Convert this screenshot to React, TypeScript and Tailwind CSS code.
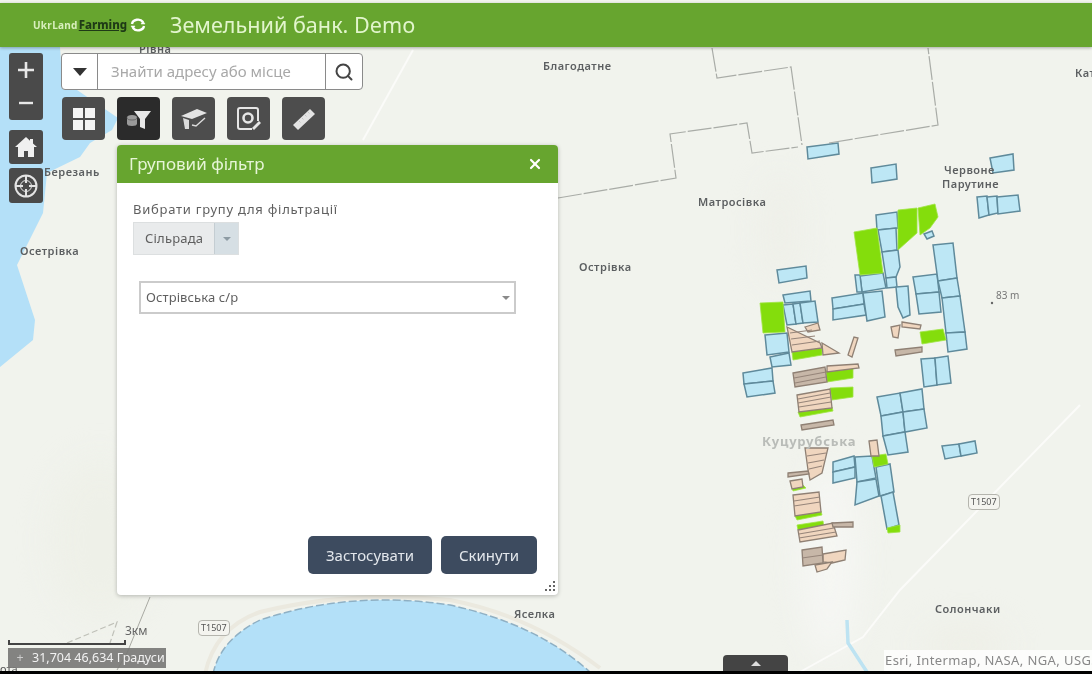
import { Search, X } from "lucide-react"

const blue = [
  "807,147 838,143 839,154 808,159",
  "871,168 896,164 897,179 872,183",
  "990,158 1013,154 1014,170 993,173",
  "977,197 987,196 989,215 979,218",
  "987,197 997,196 998,213 989,215",
  "997,197 1018,195 1020,211 998,214",
  "876,215 897,212 898,228 877,230",
  "878,230 896,228 897,250 882,252",
  "882,252 898,250 900,267 896,277 886,278",
  "777,270 806,266 807,278 779,283",
  "783,295 810,291 811,301 785,303",
  "783,305 793,304 796,324 787,325",
  "793,304 800,303 803,323 796,324",
  "800,303 815,301 818,322 803,323",
  "765,335 787,333 789,352 767,355",
  "770,357 789,353 791,365 772,367",
  "832,298 863,293 864,304 833,309",
  "833,309 864,304 866,315 833,320",
  "863,293 882,291 885,317 867,321",
  "860,276 883,273 886,288 862,292",
  "855,275 860,275 862,292 857,292",
  "886,278 896,277 897,287 887,288",
  "896,287 908,286 910,315 903,318 898,307",
  "913,277 937,274 939,292 916,294",
  "916,294 939,292 941,312 919,314",
  "933,245 953,243 957,278 938,281",
  "938,281 957,278 960,296 942,298",
  "942,298 960,296 965,332 946,333",
  "946,333 965,332 967,349 948,352",
  "921,359 935,358 937,385 924,387",
  "935,358 948,356 951,383 937,385",
  "743,373 772,368 773,381 744,384",
  "744,384 773,381 775,393 747,397",
  "877,397 900,393 903,412 881,416",
  "900,393 922,389 924,409 903,412",
  "881,416 903,412 905,432 883,436",
  "903,412 924,409 927,428 905,432",
  "883,436 905,432 908,452 888,455",
  "942,446 959,444 961,456 945,459",
  "959,444 975,441 977,453 961,456",
  "833,462 854,456 855,467 833,472",
  "833,472 855,467 855,478 833,483",
  "855,457 872,456 876,478 857,482",
  "857,482 876,479 879,496 855,505",
  "876,467 890,464 894,492 880,496",
  "881,496 893,492 899,525 887,529",
  "924,234 932,231 934,236 927,239",
]

const green = [
  "854,232 877,228 883,273 860,275",
  "898,210 917,208 917,233 898,250",
  "918,208 935,204 938,217 930,228 920,235",
  "760,303 783,302 785,332 763,333",
  "920,332 943,329 946,340 922,344",
  "792,352 822,348 822,355 793,360",
  "872,456 886,454 888,464 874,467",
  "887,528 900,525 900,532 888,533",
  "826,371 853,368 853,378 827,382",
  "830,388 853,387 853,397 832,400",
  "797,525 823,521 824,527 798,530",
  "798,412 832,407 833,411 800,417",
  "795,516 821,511 822,515 797,520",
  "792,487 803,485 806,488 793,491",
]

const tan = [
  "787,327 820,343 822,348 792,352",
  "822,343 839,353 823,355",
  "805,327 818,323 820,330 808,332",
  "848,355 854,337 858,338 852,357",
  "891,327 900,325 898,338 893,337",
  "902,322 921,325 920,329 902,327",
  "827,366 858,364 859,368 827,372",
  "797,395 830,389 832,408 799,412",
  "805,448 828,448 822,473 810,480 808,470",
  "790,481 802,479 803,487 792,489",
  "793,495 819,492 821,512 795,516",
  "798,530 833,523 837,536 800,542",
  "823,554 846,550 845,560 832,563 823,562",
  "815,565 832,562 827,569 817,572",
  "869,441 877,440 879,456 871,456",
]

// parcels that read grey-brown in the picture
const dark = [
  "895,350 922,347 922,352 896,356",
  "793,373 825,367 827,382 795,387",
  "801,425 833,420 834,425 802,430",
  "788,473 808,471 809,474 788,477",
  "832,523 853,522 853,527 833,527",
  "802,550 822,547 823,563 803,566",
]

// thin strips inside the tan parcels
const strips = [
  "M790 333L812 330M791 339L815 336M792 345L820 341",
  "M794 378L826 372M795 383L826 377",
  "M798 399L830 393M798 403L831 397M799 407L831 402",
  "M807 456L826 453M808 463L824 460M809 469L822 466",
  "M794 501L820 497M794 506L820 502",
  "M799 534L834 528M799 538L836 532",
  "M802 558L823 555",
]

const labels = [
  { text: "Рівна", cls: "left-[139px] top-[42px]" },
  { text: "Благодатне", cls: "left-[543px] top-[59px]" },
  { text: "Кат", cls: "left-[1075px] top-[66px]" },
  { text: "Матросівка", cls: "left-[698px] top-[195px]" },
  { text: "Острівка", cls: "left-[579px] top-[260px]" },
  { text: "Червоне", cls: "left-[944px] top-[163px]" },
  { text: "Парутине", cls: "left-[942px] top-[177px]" },
  { text: "Березань", cls: "left-[44px] top-[165px]" },
  { text: "Осетрівка", cls: "left-[20px] top-[244px]" },
  { text: "Яселка", cls: "left-[514px] top-[607px]" },
  { text: "Солончаки", cls: "left-[935px] top-[602px]" },
]

function MapLayer() {
  return (
    <div className="absolute inset-0 bg-[#f1f3ed]">
      <svg width="1092" height="674" className="absolute inset-0 blur-lg">
        <ellipse cx="100" cy="540" rx="50" ry="80" fill="#eef0e8" />
        <ellipse cx="780" cy="230" rx="18" ry="55" fill="#eeefe8" />
        <ellipse cx="830" cy="560" rx="30" ry="100" fill="#f5f6f3" />
        <ellipse cx="965" cy="645" rx="45" ry="22" fill="#eeefe7" />
      </svg>
      <svg width="1092" height="674" className="absolute inset-0">
        <path d="M0 47H60L62 80L80 92L118 118L112 130L90 143L80 157L47 173L43 213L17 265L35 320L33 340L0 367Z" fill="#b4e0f8" />
        <path d="M205 674Q215 628 260 612Q350 590 450 600Q530 615 600 668" fill="none" stroke="#ebe9df" strokeWidth="4" />
        <path d="M213 674Q220 640 260 620Q350 590 450 605Q540 625 592 674Z" fill="#b3e0f8" />
        <path d="M213 674Q220 640 260 620Q350 590 450 605Q540 625 592 674" fill="none" stroke="#8fb0c4" strokeWidth="1.5" strokeDasharray="8 3" />
        <path d="M1080 405L900 590L863 637L800 672" fill="none" stroke="#fbfbf9" strokeWidth="2" />
        <path d="M413 50L363 140" fill="none" stroke="#fbfbf9" strokeWidth="2" />
        <path d="M847 620L848 643L867 672" fill="none" stroke="#bde3f2" strokeWidth="3.5" />
        <path d="M150 597L127 653L117 670" fill="none" stroke="#a9aaa3" strokeWidth="1" />
        <path d="M67 643L117 622L110 643" fill="none" stroke="#bfc0b8" strokeWidth="1.2" strokeDasharray="6 3" />
        <path d="M712 48L717 78L791 67L802 145M829 143L938 125L928 48M558 198L676 178L670 134L747 123L752 153L798 147" fill="none" stroke="#a9aca7" strokeWidth="1.2" strokeDasharray="24 2" />
        <g stroke="#5f8a9b" strokeWidth="1.5" fill="#bde7f5">
          {blue.map((p) => (
            <polygon key={p} points={p} />
          ))}
        </g>
        <g fill="#84dd0c" stroke="#a0e545" strokeWidth="0.8">
          {green.map((p) => (
            <polygon key={p} points={p} />
          ))}
        </g>
        <g stroke="#8f8074" strokeWidth="1.3" fill="#f0d6bf">
          {tan.map((p) => (
            <polygon key={p} points={p} />
          ))}
        </g>
        <g stroke="#8f8074" strokeWidth="1.3" fill="#c7b7a8">
          {dark.map((p) => (
            <polygon key={p} points={p} />
          ))}
        </g>
        {strips.map((d) => (
          <path key={d} d={d} fill="none" stroke="#96857a" strokeWidth="1.2" />
        ))}
        <circle cx="992" cy="303" r="1.2" fill="#666" />
      </svg>
      {labels.map((l) => (
        <span key={l.text} className={`absolute text-[11px] leading-[14px] tracking-[0.5px] font-semibold text-[#5c5f61] whitespace-nowrap ${l.cls}`}>
          {l.text}
        </span>
      ))}
      <span className="absolute left-[996px] top-[289px] text-[10px] leading-[12px] text-[#777]">83 m</span>
      <span className="absolute left-[762px] top-[433px] text-[13px] leading-[16px] font-bold tracking-[0.8px] text-[#b9bcb8]">Куцурубська</span>
      <span className="absolute left-[968px] top-[494px] border border-[#b5b5ae] bg-[#f4f4ef] rounded-sm px-[2px] text-[9px] leading-[14px] text-[#555]">T1507</span>
      <span className="absolute left-[198px] top-[620px] border border-[#b5b5ae] bg-[#f4f4ef] rounded-sm px-[2px] text-[9px] leading-[14px] text-[#555]">T1507</span>
      <span className="absolute left-[125px] top-[624px] text-[12px] leading-[14px] text-[#666]">3км</span>
      <span className="absolute left-0 top-[662px] text-[11px] leading-[14px] text-[#555]">ота</span>
    </div>
  )
}

function Logo() {
  return (
    <div className="flex items-center ml-[33px] w-[137px]">
      <span className="text-[10px] font-bold tracking-[0.3px] text-[#d8efbd] leading-none">UkrLand</span>
      <span className="ml-[1px] text-[11.5px] font-extrabold text-[#1e3a16] leading-none underline">Farming</span>
      <svg width="16" height="16" viewBox="0 0 16 16" className="ml-[3px]" fill="none" stroke="#fff" strokeWidth="2.4">
        <path d="M2 7A6 5 0 0 1 13 5" />
        <path d="M14 9A6 5 0 0 1 3 11" />
        <path d="M11 7h4L13 4z" fill="#fff" strokeWidth="0.5" />
        <path d="M5 9H1l2 3z" fill="#fff" strokeWidth="0.5" />
      </svg>
    </div>
  )
}

function SideButtons() {
  return (
    <div className="absolute left-[9px] top-[53px] flex flex-col w-[34px] gap-[4px]">
      <div className="h-[67px] mb-[6px] rounded-[3px] bg-[#4a4a4a] flex flex-col items-center justify-around text-[#e8e8e8]">
        <svg width="18" height="18" viewBox="0 0 18 18" stroke="currentColor" strokeWidth="2.6"><path d="M9 1v16M1 9h16" /></svg>
        <svg width="18" height="18" viewBox="0 0 18 18" stroke="currentColor" strokeWidth="2.4"><path d="M2 9h14" /></svg>
      </div>
      <div className="h-[34px] rounded-[3px] bg-[#4a4a4a] flex items-center justify-center">
        <svg width="24" height="22" viewBox="0 0 24 22" fill="#f0f0f0">
          <path d="M12 1L1 11h3v10h6v-6h4v6h6V11h3l-4-3.6V3h-3v1.7z" />
        </svg>
      </div>
      <div className="h-[35px] rounded-[3px] bg-[#4a4a4a] flex items-center justify-center">
        <svg width="26" height="26" viewBox="0 0 26 26" fill="none" stroke="#e4e4e4">
          <circle cx="13" cy="13" r="10.5" strokeWidth="2" />
          <circle cx="13" cy="13" r="5.5" strokeWidth="1" />
          <path d="M13 3v7M13 16v7M3 13h7M16 13h7" strokeWidth="2" />
        </svg>
      </div>
    </div>
  )
}

function SearchBar() {
  return (
    <div className="flex h-[37px] w-[302px] bg-white border border-[#8a8a8a] rounded-[4px]">
      <div className="w-[36px] border-r border-[#8a8a8a] flex items-center justify-center">
        <svg width="14" height="8" viewBox="0 0 14 8" fill="#333"><path d="M0 0h14L7 8z" /></svg>
      </div>
      <div className="flex-1 flex items-center pl-[13px] text-[15px] text-[#a8a8a8]">Знайти адресу або місце</div>
      <div className="w-[37px] border-l border-[#8a8a8a] flex items-center justify-center text-[#444]">
        <Search size={20} strokeWidth={2.4} />
      </div>
    </div>
  )
}

function ToolButton({ active, children }: { active?: boolean; children: React.ReactNode }) {
  return (
    <div className={`w-[43px] h-[43px] rounded-[4px] flex items-center justify-center ${active ? "bg-[#2b2b2b]" : "bg-[#4d4d4d]"}`}>
      {children}
    </div>
  )
}

function Toolbar() {
  return (
    <div className="flex gap-[12px] ml-[1px]">
      <ToolButton>
        <svg width="24" height="24" viewBox="0 0 24 24" fill="#f4f4f4">
          <rect x="1" y="1" width="10" height="10" />
          <rect x="13" y="1" width="10" height="10" />
          <rect x="1" y="13" width="10" height="10" />
          <rect x="13" y="13" width="10" height="10" />
        </svg>
      </ToolButton>
      <ToolButton active>
        <svg width="26" height="22" viewBox="0 0 26 22">
          <path d="M8 3h17l-6 8v10l-5-2v-8z" fill="#e8e8e8" />
          <path d="M1 9.5a5 2.5 0 0 1 10 0v6a5 2.5 0 0 1-10 0z" fill="#9a9a9a" />
          <path d="M1 9.5a5 2.5 0 0 0 10 0" fill="none" stroke="#5c5c5c" strokeWidth="0.8" />
        </svg>
      </ToolButton>
      <ToolButton>
        <svg width="28" height="24" viewBox="0 0 28 24" fill="none">
          <path d="M1 9L17 2l10 4-15 6z" fill="#e4e4e4" />
          <path d="M3 11l6 2v9H5z" fill="#dcdcdc" />
          <path d="M12 18l4 1 9-8" stroke="#dcdcdc" strokeWidth="1.4" />
        </svg>
      </ToolButton>
      <ToolButton>
        <svg width="26" height="26" viewBox="0 0 26 26" fill="none" stroke="#e6e6e6">
          <path d="M16 23H4a2 2 0 0 1-2-2V4a2 2 0 0 1 2-2h16a2 2 0 0 1 2 2v11" strokeWidth="2" />
          <circle cx="12" cy="12" r="4.5" strokeWidth="2.6" />
          <path d="M17 23l7-7" strokeWidth="2.8" />
        </svg>
      </ToolButton>
      <ToolButton>
        <svg width="26" height="26" viewBox="0 0 26 26">
          <path d="M2 19L19 3l5 5L7 24z" fill="#e4e4e4" />
          <path d="M8 15l1.500 1.500M11 12l1.500 1.500M14 9l1.500 1.500M17 6l1.500 1.500" stroke="#bbb" strokeWidth="0.8" />
        </svg>
      </ToolButton>
    </div>
  )
}

function FilterPanel() {
  return (
    <div className="absolute left-[117px] top-[145px] w-[441px] h-[450px] bg-white rounded-[4px] shadow-[0_1px_4px_rgba(0,0,0,0.25)] flex flex-col">
      <div className="h-[38px] shrink-0 bg-[#67a52f] rounded-t-[4px] flex items-center justify-between pl-[12px] pr-[15px] text-[17px] text-[#e6f5d6]">
        <span>Груповий фільтр</span>
        <X size={16} strokeWidth={3.2} className="text-white" />
      </div>
      <div className="flex-1 flex flex-col pl-[16px] pr-[21px] pt-[17px] pb-[21px] text-[#5f5f5f]">
        <div className="text-[13px] leading-[18px] tracking-[0.75px]">Вибрати групу для фільтрації</div>
        <div className="mt-[4px] w-[106px] h-[33px] flex bg-[#e9ebec] border border-[#dcdfe0] text-[13px] tracking-[0.2px]">
          <div className="flex-1 flex items-center pl-[11px]">Сільрада</div>
          <div className="w-[24px] bg-[#d6dfe4] border-l border-[#c4cdd2] flex items-center justify-center">
            <svg width="8" height="4" viewBox="0 0 8 4" fill="#8d9ba3"><path d="M0 0h8L4 4z" /></svg>
          </div>
        </div>
        <div className="mt-[26px] ml-[6px] h-[33px] w-[377px] flex items-center justify-between border-2 border-[#cbcbcb] pl-[5px] pr-[4px] text-[13px] tracking-[0.1px]">
          <span>Острівська с/р</span>
          <svg width="8" height="4" viewBox="0 0 8 4" fill="#8a8a8a"><path d="M0 0h8L4 4z" /></svg>
        </div>
        <div className="mt-auto flex justify-end gap-[9px]">
          <button className="w-[124px] h-[38px] rounded-[5px] bg-[#3d4b5f] text-[15px] text-[#e3e7ec]">Застосувати</button>
          <button className="w-[96px] h-[38px] rounded-[5px] bg-[#3d4b5f] text-[15px] text-[#e3e7ec]">Скинути</button>
        </div>
      </div>
      <svg width="12" height="12" viewBox="0 0 12 12" fill="#666" className="absolute right-[2px] bottom-[3px]">
        <rect x="9" y="1" width="2" height="2" />
        <rect x="5" y="5" width="2" height="2" />
        <rect x="9" y="5" width="2" height="2" />
        <rect x="1" y="9" width="2" height="2" />
        <rect x="5" y="9" width="2" height="2" />
        <rect x="9" y="9" width="2" height="2" />
      </svg>
    </div>
  )
}

export default function App() {
  return (
    <div className="relative w-[1092px] h-[674px] overflow-hidden flex flex-col bg-white blur-[0.5px] font-['Noto_Sans','Open_Sans',sans-serif]">
      <MapLayer />
      <SideButtons />
      <div className="absolute left-[61px] top-[53px] flex flex-col gap-[7px]">
        <SearchBar />
        <Toolbar />
      </div>
      <FilterPanel />

      {/* scale bar + coords */}
      <div className="absolute left-[8px] top-[640px] w-[118px] h-[5px] border-x-2 border-b-2 border-[#444]" />
      <div className="absolute left-[8px] top-[648px] w-[158px] h-[20px] bg-[#777774]/90 flex items-center text-[12.5px] text-[#f2f2f2]">
        <span className="w-[24px] text-center text-[#ccc]">+</span>
        <span className="whitespace-nowrap">31,704 46,634 Градуси</span>
      </div>
      <div className="absolute left-[884px] top-[650px] w-[208px] h-[21px] bg-white/80 flex items-center pl-[1px] text-[13px] tracking-[0.4px] text-[#888] whitespace-nowrap overflow-hidden">
        Esri, Intermap, NASA, NGA, USGS
      </div>
      <div className="absolute left-[723px] top-[655px] w-[65px] h-[16px] bg-[#444] rounded-t-[4px] flex items-center justify-center">
        <svg width="10" height="5" viewBox="0 0 10 5" fill="#ddd"><path d="M5 0l5 5H0z" /></svg>
      </div>

      <div className="relative mt-[3px] h-[44px] shrink-0 bg-[#67a52f] shadow-[0_1px_3px_rgba(0,0,0,0.3)] flex items-center">
        <Logo />
        <span className="text-[21.6px] leading-none text-[#e2f5cd] whitespace-nowrap">Земельний банк. Demo</span>
      </div>
      <div className="absolute left-0 bottom-0 w-full h-[3px] bg-black" />
    </div>
  )
}
